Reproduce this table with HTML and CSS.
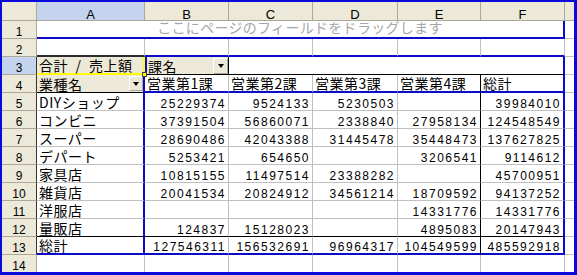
FILE: index.html
```html
<!DOCTYPE html>
<html lang="ja">
<head>
<meta charset="utf-8">
<link rel="stylesheet" href="styles.css">
</head>
<body>
<div class="sheet">
  <div class="grid">
    <!-- column headers -->
    <div class="ch"></div>
    <div class="ch sel">A</div>
    <div class="ch">B</div>
    <div class="ch">C</div>
    <div class="ch">D</div>
    <div class="ch">E</div>
    <div class="ch">F</div>
    <div class="ch g"></div>

    <!-- row 1 -->
    <div class="rh">1</div>
    <div class="jp drop">ここにページのフィールドをドラッグします</div>
    <div class="g"></div>

    <!-- row 2 -->
    <div class="rh">2</div>
    <div class="a2"></div>
    <div class="bb-blue"></div>
    <div class="bb-blue"></div>
    <div class="bb-blue"></div>
    <div class="bb-blue"></div>
    <div class="bb-blue"></div>
    <div class="g"></div>

    <!-- row 3 -->
    <div class="rh sel dk">3</div>
    <div class="jp fld a3">合計&ensp;/&ensp;売上額<span class="handle"></span></div>
    <div class="jp fld b3">課名<span class="dd b3dd"></span></div>
    <div class="colarea"></div>
    <div class="g"></div>

    <!-- row 4 -->
    <div class="rh dk">4</div>
    <div class="jp fld a4">業種名<span class="dd a4dd"></span></div>
    <div class="jp bb-blue">営業第1課</div>
    <div class="jp bb-blue">営業第2課</div>
    <div class="jp bb-blue">営業第3課</div>
    <div class="jp bb-blue br-black">営業第4課</div>
    <div class="jp bb-blue br-blue">総計</div>
    <div class="g"></div>

    <!-- row 5 -->
    <div class="rh dk">5</div>
    <div class="jp br-blue">DIYショップ</div>
    <div class="num">25229374</div>
    <div class="num">9524133</div>
    <div class="num">5230503</div>
    <div class="num br-black"></div>
    <div class="num br-blue">39984010</div>
    <div class="g"></div>

    <!-- row 6 -->
    <div class="rh dk">6</div>
    <div class="jp br-blue">コンビニ</div>
    <div class="num">37391504</div>
    <div class="num">56860071</div>
    <div class="num">2338840</div>
    <div class="num br-black">27958134</div>
    <div class="num br-blue">124548549</div>
    <div class="g"></div>

    <!-- row 7 -->
    <div class="rh dk">7</div>
    <div class="jp br-blue">スーパー</div>
    <div class="num">28690486</div>
    <div class="num">42043388</div>
    <div class="num">31445478</div>
    <div class="num br-black">35448473</div>
    <div class="num br-blue">137627825</div>
    <div class="g"></div>

    <!-- row 8 -->
    <div class="rh dk">8</div>
    <div class="jp br-blue">デパート</div>
    <div class="num">5253421</div>
    <div class="num">654650</div>
    <div class="num"></div>
    <div class="num br-black">3206541</div>
    <div class="num br-blue">9114612</div>
    <div class="g"></div>

    <!-- row 9 -->
    <div class="rh dk">9</div>
    <div class="jp br-blue">家具店</div>
    <div class="num">10815155</div>
    <div class="num">11497514</div>
    <div class="num">23388282</div>
    <div class="num br-black"></div>
    <div class="num br-blue">45700951</div>
    <div class="g"></div>

    <!-- row 10 -->
    <div class="rh dk">10</div>
    <div class="jp br-blue">雑貨店</div>
    <div class="num">20041534</div>
    <div class="num">20824912</div>
    <div class="num">34561214</div>
    <div class="num br-black">18709592</div>
    <div class="num br-blue">94137252</div>
    <div class="g"></div>

    <!-- row 11 -->
    <div class="rh dk">11</div>
    <div class="jp br-blue">洋服店</div>
    <div class="num"></div>
    <div class="num"></div>
    <div class="num"></div>
    <div class="num br-black">14331776</div>
    <div class="num br-blue">14331776</div>
    <div class="g"></div>

    <!-- row 12 -->
    <div class="rh dk">12</div>
    <div class="jp br-blue bb-black">量販店</div>
    <div class="num bb-black">124837</div>
    <div class="num bb-black">15128023</div>
    <div class="num bb-black"></div>
    <div class="num br-black bb-black">4895083</div>
    <div class="num br-blue bb-black">20147943</div>
    <div class="g"></div>

    <!-- row 13 -->
    <div class="rh dk">13</div>
    <div class="jp br-blue bb-blue">総計</div>
    <div class="num bb-blue">127546311</div>
    <div class="num bb-blue">156532691</div>
    <div class="num bb-blue">96964317</div>
    <div class="num br-black bb-blue">104549599</div>
    <div class="num br-blue bb-blue">485592918</div>
    <div class="g"></div>

    <!-- row 14 -->
    <div class="rh">14</div>
    <div></div>
    <div></div>
    <div></div>
    <div></div>
    <div></div>
    <div></div>
    <div class="g"></div>
  </div>
</div>
</body>
</html>
```

FILE: styles.css
```css
html, body {
  margin: 0;
  padding: 0;
  background: #ffffff;
}

.sheet {
  width: 577px;
  height: 275px;
  box-sizing: border-box;
  border-style: solid;
  border-color: #0a0adc;
  border-width: 2px 3px 3px 2px;
  overflow: hidden;
  background: #ffffff;
}

.grid {
  display: grid;
  grid-template-columns: 35px 108px 84px 84px 85px 83px 84px 9px;
  grid-template-rows: 19px repeat(14, 18px);
}

.grid > div {
  box-sizing: border-box;
  border-right: 1px solid #c0c0c0;
  border-bottom: 1px solid #c0c0c0;
  display: flex;
  align-items: flex-end;
  overflow: visible;
  white-space: nowrap;
  position: relative;
  color: #000;
}

.grid > .g {
  border-right: none;
}

/* column headers */
.grid > .ch {
  background: #ece9d8;
  border-color: #aca899;
  font-family: "Liberation Sans", Arial, sans-serif;
  font-size: 13px;
  line-height: 11px;
  justify-content: center;
}

.grid > .ch.sel,
.grid > .rh.sel {
  background: #c4d4ef;
}

/* row headers */
.grid > .rh {
  background: #ece9d8;
  border-color: #aca899;
  font-family: "Liberation Sans", Arial, sans-serif;
  font-size: 12px;
  line-height: 11px;
  justify-content: center;
}

.grid > .rh.dk {
  border-right-color: #333333;
}

/* text */
.jp {
  font-family: "Noto Sans CJK JP", "Liberation Sans", sans-serif;
  font-size: 14px;
  line-height: 15px;
  letter-spacing: 0.5px;
  padding-left: 2px;
}

.num {
  font-family: "Liberation Sans", Arial, sans-serif;
  font-size: 12px;
  line-height: 11px;
  letter-spacing: 1.5px;
  justify-content: flex-end;
  padding-right: 2px;
}

/* page field drop zone */
.grid > .drop {
  grid-column: 2 / 8;
  justify-content: center;
  color: #a6a6a6;
  letter-spacing: 0.3px;
  padding-left: 0;
  padding-bottom: 3px;
  line-height: 13px;
  border-right: 2px solid #0c0cc8;
  border-bottom: 2px solid #0c0cc8;
}

/* pivot lines */
.grid > .bb-blue {
  border-bottom: 2px solid #0c0cc8;
}

.grid > .br-blue {
  border-right: 2px solid #0c0cc8;
}

.grid > .bb-black {
  border-bottom: 1px solid #000000;
}

.grid > .br-black {
  border-right: 1px solid #000000;
}

.grid > .a2 {
  border-bottom: 2px solid #2b2b2b;
}

/* field buttons */
.grid > .fld {
  background: #ece9d8;
}

.grid > .a3 {
  z-index: 2;
  border-right: 2px solid #ffff00;
  border-bottom: 2px solid #ffff00;
}

.grid > .b3 {
  grid-column: 3;
  padding-left: 1px;
  border-left: 2px solid #0c0cc8;
  border-right: 1px solid #000000;
  border-bottom: 1px solid #000000;
}

.grid > .a4 {
  border-right: 2px solid #0c0cc8;
  border-bottom: 1px solid #000000;
}

.grid > .colarea {
  grid-column: 4 / 8;
  border-right: 2px solid #0c0cc8;
  border-bottom: 1px solid #000000;
}

/* dropdown arrow buttons */
.dd {
  margin-left: auto;
  align-self: stretch;
  box-sizing: border-box;
  background: #ece9d8;
  border-left: 1px solid #ffffff;
  border-top: 1px solid #ffffff;
  border-right: 1px solid #aca899;
  border-bottom: 1px solid #aca899;
  display: flex;
  align-items: center;
  justify-content: center;
}

.dd::after {
  content: "";
  width: 0;
  height: 0;
  border-left: 3px solid transparent;
  border-right: 3px solid transparent;
  border-top: 4px solid #000000;
}

.a4dd {
  width: 14px;
  margin-top: 1px;
  margin-bottom: 1px;
}

.b3dd {
  width: 15px;
  margin-top: 1px;
}

/* selection fill handle */
.handle {
  position: absolute;
  right: -4px;
  bottom: -4px;
  width: 5px;
  height: 5px;
  box-sizing: border-box;
  background: #ffff00;
  border: 1px solid #404040;
}
```
